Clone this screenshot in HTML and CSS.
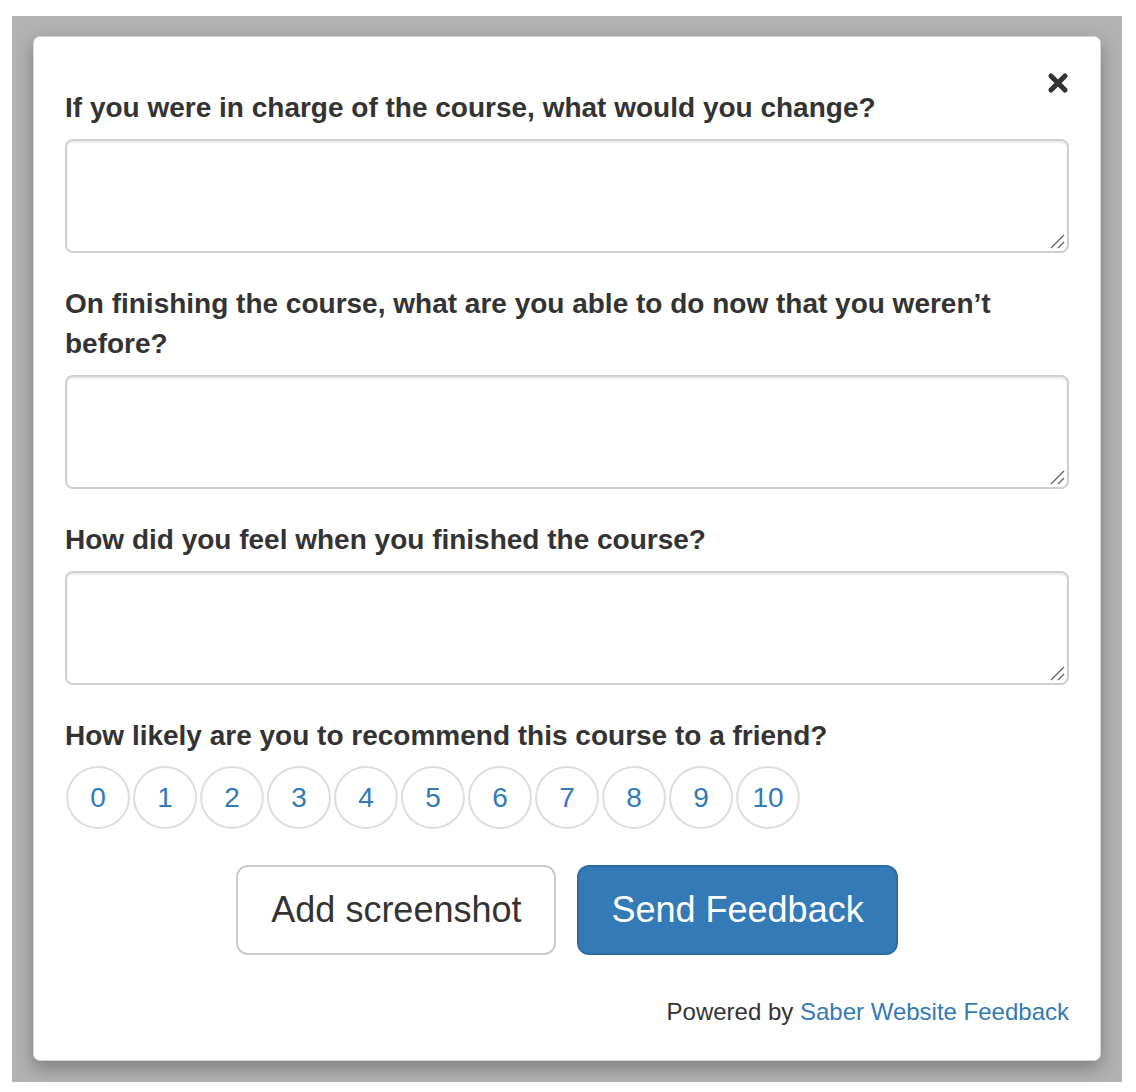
FILE: index.html
```html
<!DOCTYPE html>
<html lang="en">
<head>
<meta charset="utf-8">
<title>Feedback</title>
<link rel="stylesheet" href="styles.css">
</head>
<body>
<div class="backdrop">
  <div class="modal">
    <button class="close" type="button" aria-label="Close">
      <svg viewBox="0 0 22 22" width="22" height="22"><path d="M4 4 L18 18 M18 4 L4 18" stroke="#333" stroke-width="5.2" stroke-linecap="round" fill="none"/></svg>
    </button>
    <form class="form">
      <div class="group">
        <label class="label">If you were in charge of the course, what would you change?</label>
        <div class="field">
          <textarea class="area"></textarea>
          <svg class="grip" viewBox="0 0 16 16" width="16" height="16"><path d="M2 15 L15 2 M9 15 L15 9" stroke="#666" stroke-width="1.4" fill="none"/></svg>
        </div>
      </div>
      <div class="group">
        <label class="label">On finishing the course, what are you able to do now that you weren’t before?</label>
        <div class="field">
          <textarea class="area"></textarea>
          <svg class="grip" viewBox="0 0 16 16" width="16" height="16"><path d="M2 15 L15 2 M9 15 L15 9" stroke="#666" stroke-width="1.4" fill="none"/></svg>
        </div>
      </div>
      <div class="group">
        <label class="label">How did you feel when you finished the course?</label>
        <div class="field">
          <textarea class="area"></textarea>
          <svg class="grip" viewBox="0 0 16 16" width="16" height="16"><path d="M2 15 L15 2 M9 15 L15 9" stroke="#666" stroke-width="1.4" fill="none"/></svg>
        </div>
      </div>
      <div class="group last">
        <label class="label">How likely are you to recommend this course to a friend?</label>
        <div class="rating">
          <span class="dot">0</span><span class="dot">1</span><span class="dot">2</span><span class="dot">3</span><span class="dot">4</span><span class="dot">5</span><span class="dot">6</span><span class="dot">7</span><span class="dot">8</span><span class="dot">9</span><span class="dot">10</span>
        </div>
      </div>
      <div class="actions">
        <button type="button" class="btn btn-default">Add screenshot</button>
        <button type="button" class="btn btn-primary">Send Feedback</button>
      </div>
      <div class="powered">Powered by <a href="#" class="link">Saber Website Feedback</a></div>
    </form>
  </div>
</div>
</body>
</html>
```
FILE: styles.css
```css
html, body {
  margin: 0;
  padding: 0;
  background: #fff;
}
body {
  font-family: "Liberation Sans", Arial, Helvetica, sans-serif;
  color: #333;
}
.backdrop {
  margin: 16px 14px 10px 12px;
  padding: 20px 21px 21px 21px;
  background: #b2b2b2;
}
.modal {
  position: relative;
  background: #fff;
  border: 1px solid #d6d6d6;
  border-radius: 7px;
  box-shadow: 0 7px 18px rgba(0, 0, 0, 0.3);
  padding: 51px 31px 31px 31px;
}
.close {
  position: absolute;
  top: 35px;
  right: 31px;
  width: 22px;
  height: 22px;
  padding: 0;
  border: 0;
  background: transparent;
  display: block;
}
.close svg { display: block; }
.form {
  display: flex;
  flex-direction: column;
}
.group {
  display: flex;
  flex-direction: column;
  margin-bottom: 31px;
}
.group.last {
  margin-bottom: 36px;
}
.label {
  font-size: 28px;
  font-weight: bold;
  line-height: 40px;
  margin-bottom: 11px;
}
.group.last .label {
  margin-bottom: 10px;
}
.field {
  position: relative;
  height: 114px;
}
.area {
  display: block;
  box-sizing: border-box;
  width: 100%;
  height: 114px;
  border: 2px solid #cfcfcf;
  border-radius: 8px;
  box-shadow: inset 0 2px 2px rgba(0, 0, 0, 0.075);
  font-family: inherit;
  font-size: 28px;
  margin: 0;
  resize: none;
}
.grip {
  position: absolute;
  right: 4px;
  bottom: 4px;
  display: block;
}
.rating {
  display: flex;
  gap: 3px;
  padding-left: 1px;
}
.dot {
  box-sizing: border-box;
  width: 64px;
  height: 63px;
  border: 2px solid #ddd;
  border-radius: 50%;
  display: flex;
  align-items: center;
  justify-content: center;
  color: #337ab7;
  font-size: 28px;
}
.actions {
  display: flex;
  justify-content: center;
  gap: 21px;
  margin-bottom: 40px;
}
.btn {
  box-sizing: border-box;
  font-family: inherit;
  font-size: 36px;
  line-height: 48px;
  padding: 19px 33px;
  border-radius: 12px;
  border: 2px solid #ccc;
  background: #fff;
  color: #333;
  margin: 0;
}
.btn-primary {
  background: #337ab7;
  border-color: #2e6da4;
  color: #fff;
  padding: 19px 32px;
}
.powered {
  text-align: right;
  font-size: 24px;
  line-height: 34px;
  color: #333;
}
.link {
  color: #337ab7;
  text-decoration: none;
}
```
